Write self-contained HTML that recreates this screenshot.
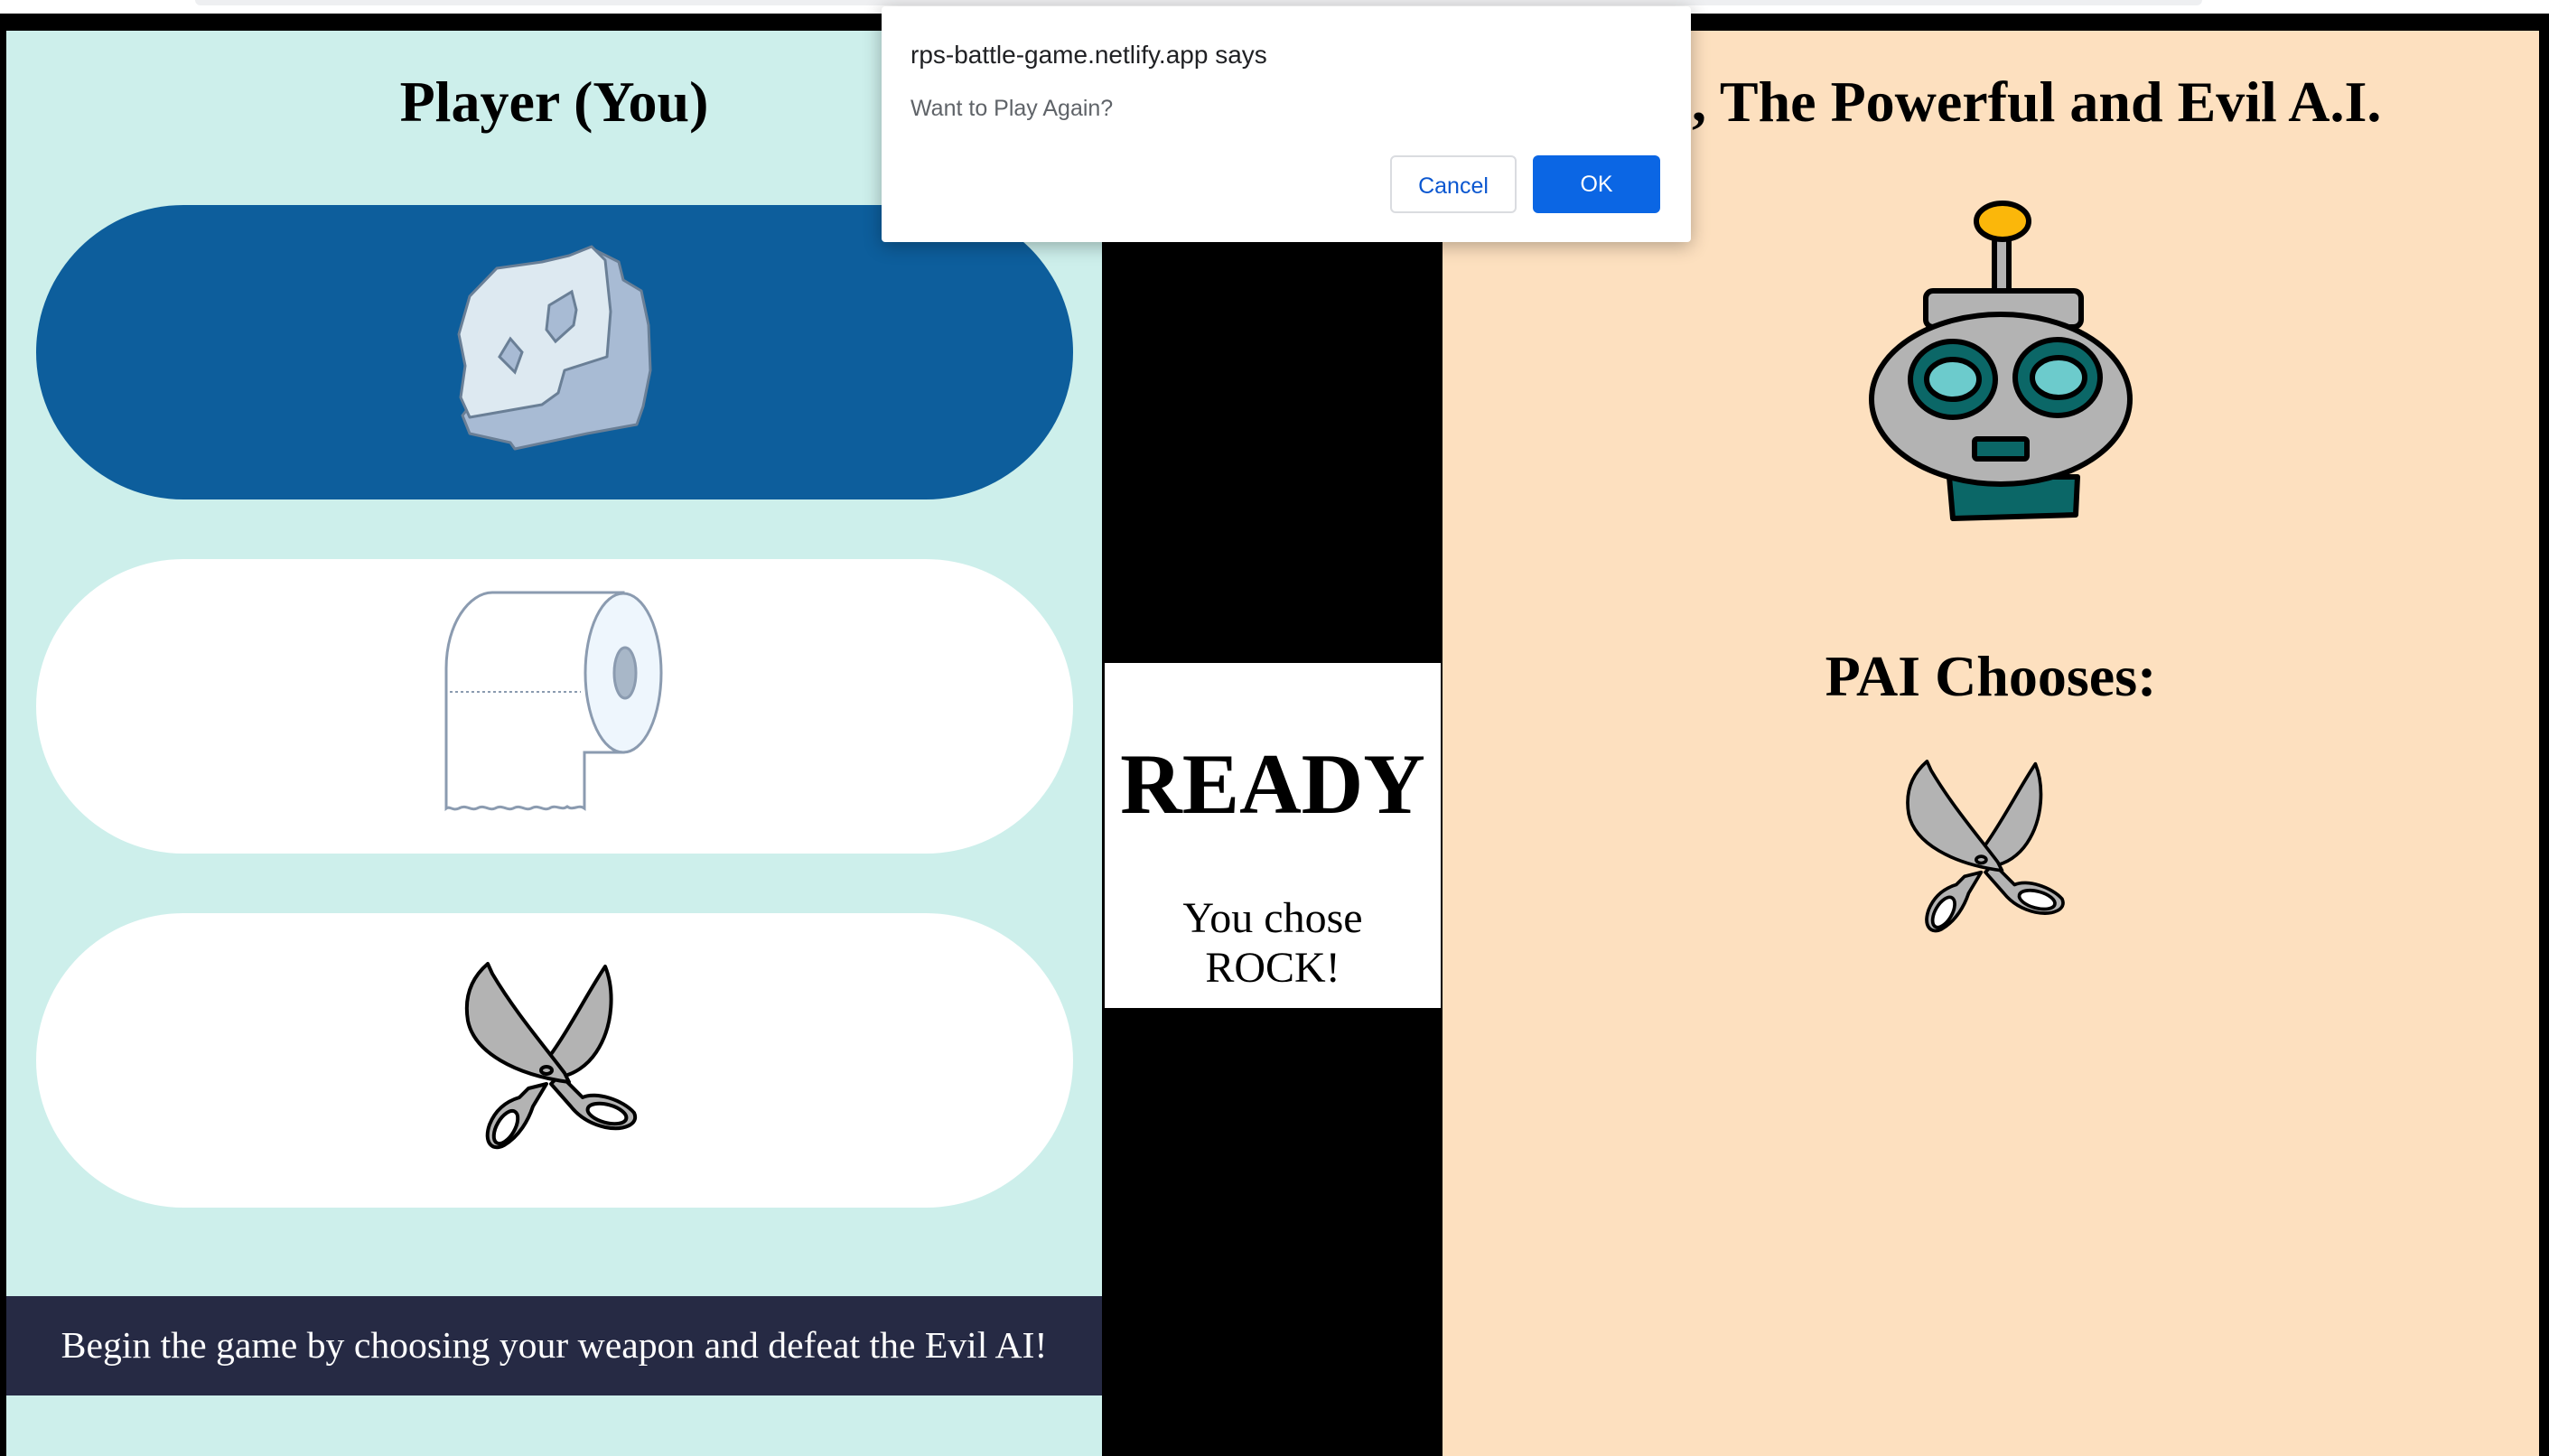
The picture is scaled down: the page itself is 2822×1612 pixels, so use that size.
<!DOCTYPE html>
<html><head><meta charset="utf-8"><style>
*{margin:0;padding:0;box-sizing:border-box}
html,body{width:2822px;height:1612px;overflow:hidden;background:#000;position:relative;font-family:"Liberation Serif",serif}
.abs{position:absolute}
#topbar{left:0;top:0;width:2822px;height:15px;background:#fff}
#topbar div{position:absolute;left:216px;top:0;width:2222px;height:6px;background:#eeeff1;border-radius:0 0 10px 10px}
#left{left:7px;top:34px;width:1213px;height:1578px;background:#cdefeb}
#right{left:1597px;top:34px;width:1214px;height:1578px;background:#fde0bf}
h1{position:absolute;font-size:64px;font-weight:bold;white-space:nowrap;text-align:center;line-height:1}
.pill{position:absolute;left:40px;width:1148px;height:326px;border-radius:163px;background:#fff}
#banner{left:7px;top:1435px;width:1213px;height:110px;background:#262a44;color:#fff;font-size:41.7px;text-align:center;line-height:110px}
#box{left:1223px;top:734px;width:372px;height:382px;background:#fff}
#dlg{left:976px;top:7px;width:896px;height:261px;background:#fff;border-radius:4px;box-shadow:0 4px 20px rgba(0,0,0,.3);font-family:"Liberation Sans",sans-serif}
.btn{position:absolute;top:165px;height:64px;border-radius:6px;font-size:25px;text-align:center;line-height:64px;font-family:"Liberation Sans",sans-serif}
</style></head><body>
<div id="topbar" class="abs"><div></div></div>
<div id="left" class="abs"></div>
<div id="right" class="abs"></div>
<h1 style="left:7px;width:1213px;top:81px">Player (You)</h1>
<h1 style="left:1595px;width:1214px;top:81px">PAI, The Powerful and Evil A.I.</h1>

<div class="pill" style="top:227px;background:#0d5e9c"></div>
<div class="pill" style="top:619px"></div>
<div class="pill" style="top:1011px"></div>

<!-- rock -->
<svg class="abs" style="left:480px;top:250px" width="280" height="280" viewBox="0 0 280 280">
<path d="M175 25 L205 40 L210 60 L230 72 L238 110 L240 160 L232 200 L225 220 L170 230 L90 247 L85 240 L40 230 L32 210 Z" fill="#a8bbd4" stroke="#6a7f96" stroke-width="3" stroke-linejoin="round"/>
<path d="M40 78 L70 47 L120 40 L150 33 L175 23 L190 38 L196 95 L192 145 L145 160 L138 185 L120 198 L80 205 L40 212 L30 190 L35 155 L28 120 Z" fill="#dde9f1" stroke="#6a7f96" stroke-width="3" stroke-linejoin="round"/>
<path d="M128 88 L153 73 L158 93 L155 110 L135 128 L125 115 Z" fill="#a8bbd4" stroke="#6a7f96" stroke-width="3"/>
<path d="M85 125 L98 140 L90 162 L73 145 Z" fill="#a8bbd4" stroke="#6a7f96" stroke-width="3"/>
</svg>

<!-- toilet paper -->
<svg class="abs" style="left:480px;top:640px" width="270" height="270" viewBox="0 0 270 270">
<path d="M14 255 L14 100 C14 50 40 16 65 16 L210 16 L210 193 L167 193 L167 255 C160 250 155 258 148 253 C141 258 136 250 128 255 C121 258 116 250 108 255 C101 258 96 250 88 255 C81 258 76 250 68 255 C61 258 56 250 48 255 C41 258 36 250 28 255 C21 258 18 252 14 255 Z" fill="#fff" stroke="#8b9bb0" stroke-width="3"/>
<ellipse cx="210" cy="105" rx="42" ry="88" fill="#eef6fd" stroke="#8b9bb0" stroke-width="3"/>
<ellipse cx="212" cy="105" rx="12" ry="28" fill="#a8b7c8" stroke="#8b9bb0" stroke-width="3"/>
<line x1="18" y1="126" x2="163" y2="126" stroke="#8b9bb0" stroke-width="2" stroke-dasharray="3 3"/>
</svg>

<!-- scissors -->
<svg class="abs" style="left:480px;top:1040px" width="260" height="260" viewBox="0 0 260 260">
<g id="sc" fill="#b3b3b3" stroke="#000" stroke-width="4" stroke-linejoin="round">
<path d="M105 165 L95 175 C85 178 70 185 62 205 C55 225 65 235 78 228 C95 218 105 200 110 185 L125 160 Z"/>
<ellipse cx="80" cy="208" rx="10" ry="20" transform="rotate(30 80 208)" fill="#fff"/>
<path d="M140 150 L165 175 C180 168 210 178 222 192 C228 205 210 212 190 208 C172 204 160 195 152 185 L130 160 Z"/>
<ellipse cx="192" cy="193" rx="22" ry="10" transform="rotate(15 192 193)" fill="#fff"/>
<path d="M190 30 C200 55 200 95 180 125 C170 140 155 150 140 152 L128 130 C150 100 170 60 190 30 Z"/>
<path d="M60 27 C45 40 33 60 38 90 C45 125 90 150 150 158 L145 148 C120 115 90 80 65 38 Z"/>
<ellipse cx="125" cy="145" rx="6" ry="4" fill="#b3b3b3"/>
</g>
</svg>

<div id="banner" class="abs">Begin the game by choosing your weapon and defeat the Evil AI!</div>

<div id="box" class="abs">
<div class="abs" style="left:0;width:372px;top:64px;text-align:center;font-size:95px;font-weight:bold;line-height:140px">READY</div>
<div class="abs" style="left:0;width:372px;top:255px;text-align:center;font-size:48px;line-height:55px">You chose<br>ROCK!</div>
</div>

<!-- robot -->
<svg class="abs" style="left:2050px;top:210px" width="330" height="380" viewBox="0 0 330 380">
<g stroke="#000" stroke-width="6" stroke-linejoin="round">
<rect x="158" y="52" width="16" height="62" fill="#b3b3b3"/>
<ellipse cx="167" cy="35" rx="29" ry="20" fill="#fbb70a"/>
<path d="M108 318 L250 318 L248 360 L112 364 Z" fill="#0b6767"/>
<rect x="82" y="112" width="172" height="40" rx="8" fill="#b3b3b3"/>
<ellipse cx="165" cy="232" rx="143" ry="94" fill="#b3b3b3"/>
<ellipse cx="112" cy="210" rx="47" ry="42" fill="#0b6767"/>
<ellipse cx="112" cy="210" rx="29" ry="22" fill="#6ccbcc"/>
<ellipse cx="228" cy="208" rx="47" ry="42" fill="#0b6767"/>
<ellipse cx="229" cy="208" rx="29" ry="22" fill="#6ccbcc"/>
<rect x="136" y="276" width="58" height="22" rx="3" fill="#0b6767"/>
</g>
</svg>

<h1 style="left:1597px;width:1214px;top:717px">PAI Chooses:</h1>

<svg class="abs" style="left:2078px;top:818px" width="240" height="240" viewBox="0 0 260 260">
<use href="#sc"/>
</svg>

<!-- dialog -->
<div id="dlg" class="abs">
<div class="abs" style="left:32px;top:38px;font-size:28px;color:#202124">rps-battle-game.netlify.app says</div>
<div class="abs" style="left:32px;top:99px;font-size:25px;color:#5f6368">Want to Play Again?</div>
<div class="btn" style="left:563px;width:140px;border:2px solid #dadce0;color:#0b57d0">Cancel</div>
<div class="btn" style="left:721px;width:141px;background:#0b66e4;color:#fff">OK</div>
</div>
</body></html>
